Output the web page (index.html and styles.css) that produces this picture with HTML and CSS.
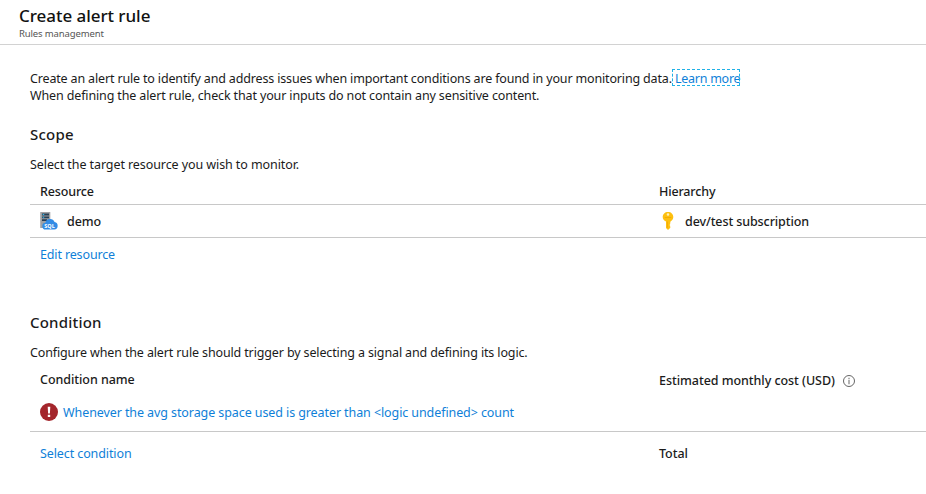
FILE: index.html
```html
<!DOCTYPE html>
<html lang="en">
<head>
<meta charset="utf-8">
<title>Create alert rule</title>
<link rel="stylesheet" href="styles.css">
</head>
<body>
<header class="header">
  <h1 class="title">Create alert rule</h1>
  <p class="subtitle">Rules management</p>
</header>
<main class="content">
  <p class="intro"><span class="intro-lead">Create an alert rule to identify and address issues when important conditions are found in your monitoring data.</span><a class="learn">Learn more</a><br>When defining the alert rule, check that your inputs do not contain any sensitive content.</p>
  <section class="scope">
    <h2 class="heading">Scope</h2>
    <p class="description description-scope">Select the target resource you wish to monitor.</p>
    <div class="row row-head"><span>Resource</span><span>Hierarchy</span></div>
    <div class="row row-item">
      <div class="cell">
        <svg class="sql-icon" viewBox="0 0 18 18">
          <path fill="#a0a1a3" d="M.7 0h9.1q.5 0 .5.5V16H.7q-.5 0-.5-.5V.5Q.2 0 .7 0z"/>
          <path fill="#263f55" d="M2 1.6h7v1.8H2zM2 4.4h7v1.8H2zM2 7.2h5V9H2z"/>
          <path fill="#32bdf0" d="M2.7 2h1.5v1H2.7zM2.7 4.8h1.5v1H2.7z"/>
          <path fill="#338ce5" d="M6 17.5a3.4 3.4 0 0 1-.6-6.8A4.9 4.9 0 0 1 14.6 10 3.8 3.8 0 0 1 14.3 17.5z"/>
          <text class="sql-text" x="4.3" y="15.6">SQL</text>
        </svg>
        <span>demo</span>
      </div>
      <div class="cell">
        <svg class="key-icon" viewBox="0 0 12 18">
          <path fill="#fdc010" d="M6 0c3.1 0 5.3 2.1 5.3 5 0 1.9-1 3.4-2.6 4.3l-.4 1v1.2l-.7.7.7.8-.7.8.7.8v1.1L6 18l-2-2V9.5C2.1 8.7.7 7 .7 5 .7 2.1 2.9 0 6 0z"/>
          <path fill="#fff2b8" d="M6 1.2a1.3 1.3 0 1 1 0 2.6 1.3 1.3 0 0 1 0-2.6z"/>
          <path fill="#f0a500" d="M2.7 5.2h6.6v.9H2.7zM4.9 9.5h.8v6.6l-.8-.7z"/>
        </svg>
        <span class="subscription">dev/test subscription</span>
      </div>
    </div>
    <p class="action"><a>Edit resource</a></p>
  </section>
  <section class="condition">
    <h2 class="heading">Condition</h2>
    <p class="description">Configure when the alert rule should trigger by selecting a signal and defining its logic.</p>
    <div class="row row-cond-head">
      <span>Condition name</span>
      <div class="cell cost">
        <span>Estimated monthly cost (USD)</span>
        <svg class="info-icon" viewBox="0 0 12 12"><circle cx="6" cy="6" r="5.5" fill="none" stroke="#666"/><path fill="#666" d="M5.5 2.8h1v1.1h-1zM5.5 4.8h1v4.4h-1z"/></svg>
      </div>
    </div>
    <div class="row-condition">
      <svg class="error-icon" viewBox="0 0 18 18"><circle cx="9" cy="9" r="9" fill="#a4262c"/><path fill="#fff" d="M7.7 3.8h2.6l-.4 6.6H8.1zM7.8 11.8h2.4v2.3H7.8z"/></svg>
      <a>Whenever the avg storage space used is greater than &lt;logic undefined&gt; count</a>
    </div>
    <div class="row row-total"><a>Select condition</a><span>Total</span></div>
  </section>
</main>
</body>
</html>
```
FILE: styles.css
```css
* { box-sizing: border-box; }
body { margin: 0; background: #fff; color: #1b1b1b; font: 12.5px/17px "Noto Sans", sans-serif; overflow: hidden; }
h1, h2, p { margin: 0; font-weight: 400; }
a { color: #0f7fd8; }
.header { height: 45px; padding: 4px 0 0 19px; border-bottom: 1px solid #d2d2d2; }
.title { font-size: 17px; line-height: 23px; font-weight: 500; letter-spacing: -.05px; color: #111; }
.subtitle { font-size: 9.5px; line-height: 13px; letter-spacing: -.13px; color: #555; }
.content { padding: 25px 0 0 30px; }
.intro { white-space: nowrap; letter-spacing: -.135px; }
.intro-lead { letter-spacing: -.157px; }
.learn { position: relative; margin-left: 3px; letter-spacing: -.25px; }
.learn::before { content: ""; box-sizing: border-box; position: absolute; left: -3px; right: 0; top: -1px; height: 17px; border: 1px dashed #1fb1e6; }
.scope { height: 188px; padding-top: 19px; }
.heading { height: 22px; font-size: 15px; line-height: 22px; font-weight: 500; letter-spacing: .2px; }
.description { margin-top: 11px; height: 17px; letter-spacing: -.135px; }
.description-scope { letter-spacing: -.085px; }
.row { display: grid; grid-template-columns: 619px 1fr; padding-left: 10px; align-items: center; letter-spacing: -.05px; }
.row-head { height: 32px; padding-top: 5px; border-bottom: 1px solid #c8c8c8; font-weight: 500; letter-spacing: -.15px; }
.row-item { height: 33px; border-bottom: 1px solid #c8c8c8; font-weight: 500; }
.cell { display: flex; align-items: center; }
.sql-icon { width: 18px; height: 18px; margin-right: 9px; }
.sql-text { font: 700 5.5px "Noto Sans", sans-serif; letter-spacing: 0; fill: #fff; }
.key-icon { width: 12px; height: 18px; margin: 0 11px 0 3px; }
.subscription { letter-spacing: -.1px; }
.action { padding: 8px 0 0 10px; letter-spacing: -.14px; }
.condition { padding-top: 19px; }
.row-cond-head { height: 27px; padding-top: 10px; align-items: start; font-weight: 500; }
.cost { padding-top: 1px; }
.info-icon { width: 12px; height: 12px; margin-left: 8px; }
.row-condition { display: flex; align-items: center; height: 44px; padding: 5px 0 0 10px; border-bottom: 1px solid #c8c8c8; letter-spacing: -.09px; }
.error-icon { width: 18px; height: 18px; margin-right: 5px; }
.row-total { height: 43px; font-weight: 500; }
.row-total a { font-weight: 400; letter-spacing: -.1px; }
```
